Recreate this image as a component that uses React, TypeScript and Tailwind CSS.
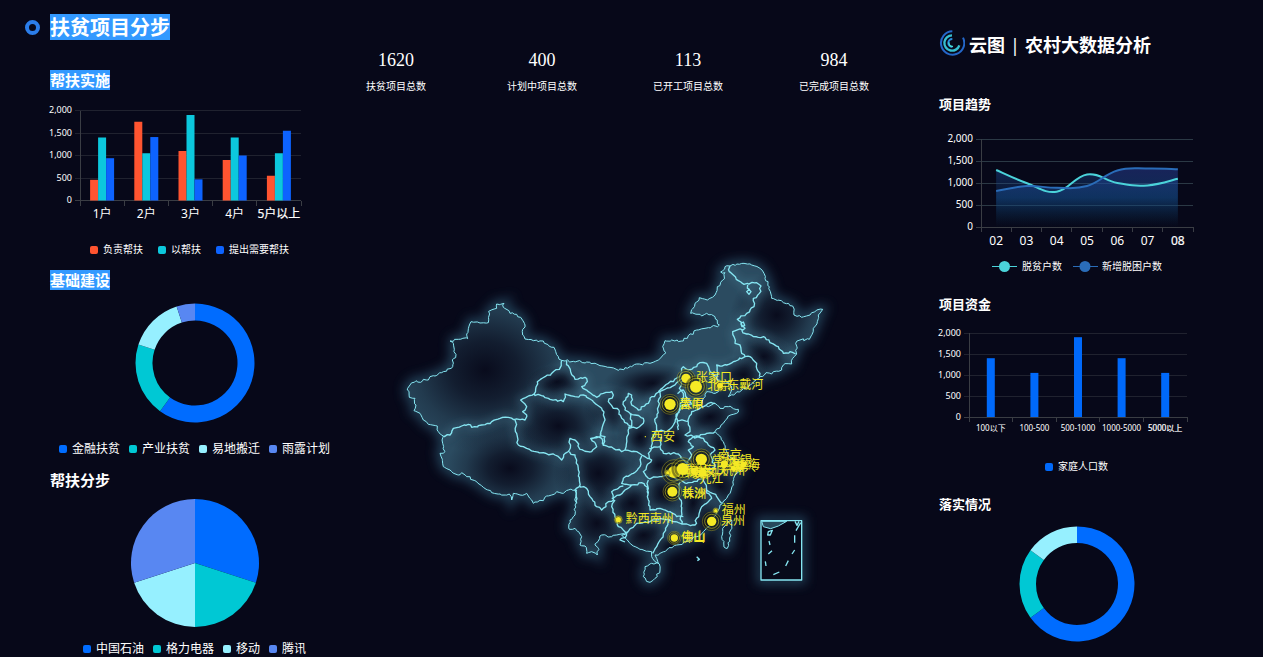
import React from 'react';

const SANS = "font-['Noto_Sans','Noto_Sans_CJK_SC',sans-serif]";

/* ---------- shared chart pieces ---------- */

type LegendItem = { x: number; label: string; color: string };

function Legend({ items, y, size }: { items: LegendItem[]; y: number; size: number }) {
  return (
    <g fill="#fff" fontSize={size}>
      {items.map((item) => (
        <g key={item.label}>
          <rect x={item.x} y={y - 4} width="8" height="8" rx="2" fill={item.color} />
          <text x={item.x + 13} y={y - 1} dominantBaseline="central">
            {item.label}
          </text>
        </g>
      ))}
    </g>
  );
}

type Frame = { left: number; right: number; top: number; step: number };

function Axes({
  frame,
  categories,
  gridColor,
  valueSize,
  labelSize,
  labelY,
}: {
  frame: Frame;
  categories: string[];
  gridColor: string;
  valueSize: number;
  labelSize: number;
  labelY: number;
}) {
  const { left, right, top, step } = frame;
  const bottom = top + step * 4;
  const band = (right - left) / categories.length;
  return (
    <g shapeRendering="crispEdges">
      {['2,000', '1,500', '1,000', '500', '0'].map((value, i) => (
        <g key={value}>
          <line x1={left - 5} x2={right} y1={top + i * step} y2={top + i * step} stroke={i === 4 ? '#3a3d44' : gridColor} />
          <text x={left - 8} y={top + i * step - 1} textAnchor="end" dominantBaseline="central" fill="#fff" fontSize={valueSize}>
            {value}
          </text>
        </g>
      ))}
      <line x1={left} x2={left} y1={top} y2={bottom} stroke="#3a3d44" />
      {categories.map((c, i) => (
        <g key={c}>
          <line x1={left + band * i} x2={left + band * i} y1={bottom} y2={bottom + 5} stroke="#3a3d44" />
          <text
            x={left + band * (i + 0.5)}
            y={labelY}
            textAnchor="middle"
            dominantBaseline="central"
            fill="#fff"
            fontSize={labelSize}
            stroke={i === categories.length - 1 ? '#fff' : 'none'}
            strokeWidth="0.2"
          >
            {c}
          </text>
        </g>
      ))}
      <line x1={right} x2={right} y1={bottom} y2={bottom + 5} stroke="#3a3d44" />
    </g>
  );
}

function BarChart({
  width,
  frame,
  categories,
  series,
  labelSize,
  labelY,
  legend,
  legendY,
  title,
}: {
  width: number;
  frame: Frame;
  categories: string[];
  series: { color: string; values: number[] }[];
  labelSize: number;
  labelY: number;
  legend: LegendItem[];
  legendY: number;
  title: string;
}) {
  const band = (frame.right - frame.left) / categories.length;
  const bottom = frame.top + frame.step * 4;
  return (
    <svg width={width} height="180" viewBox={`0 0 ${width} 180`} className={`block overflow-visible ${SANS}`} role="img" aria-label={title}>
      <Axes frame={frame} categories={categories} gridColor="#20222f" valueSize={9} labelSize={labelSize} labelY={labelY} />
      {series.map((s, k) =>
        s.values.map((v, i) => {
          const h = (v / 500) * frame.step;
          const x = frame.left + band * (i + 0.5) + (k - series.length / 2) * 8;
          return <rect key={`${k}-${i}`} x={x} y={bottom - h} width="8" height={h} fill={s.color} />;
        }),
      )}
      <Legend items={legend} y={legendY} size={10} />
    </svg>
  );
}

function PieChart({
  width,
  height,
  cx,
  cy,
  outer,
  inner,
  slices,
  legend,
  title,
}: {
  width: number;
  height: number;
  cx: number;
  cy: number;
  outer: number;
  inner: number;
  slices: { share: number; color: string }[];
  legend?: LegendItem[];
  title: string;
}) {
  let start = 0;
  const at = (share: number, r: number) => {
    const a = (share / 100) * Math.PI * 2;
    return `${(cx + Math.sin(a) * r).toFixed(2)} ${(cy - Math.cos(a) * r).toFixed(2)}`;
  };
  return (
    <svg width={width} height={height} viewBox={`0 0 ${width} ${height}`} className={`block overflow-visible ${SANS}`} role="img" aria-label={title}>
      {slices.map((s) => {
        const from = start;
        const to = start + s.share;
        start = to;
        const large = s.share > 50 ? 1 : 0;
        const d = `M${at(from, outer)}A${outer} ${outer} 0 ${large} 1 ${at(to, outer)}L${at(to, inner)}A${inner} ${inner} 0 ${large} 0 ${at(from, inner)}Z`;
        return <path key={s.color} d={d} fill={s.color} />;
      })}
      {legend && <Legend items={legend} y={159} size={12} />}
    </svg>
  );
}

function TrendChart() {
  const frame: Frame = { left: 42, right: 254, top: 25, step: 22 };
  const band = (frame.right - frame.left) / 7;
  const bottom = frame.top + frame.step * 4;
  const toPoints = (values: number[]) =>
    values.map((v, i) => [frame.left + band * (i + 0.5), bottom - (v / 500) * frame.step]);
  const curve = (values: number[]) => {
    const p = toPoints(values);
    let d = `M${p[0][0]} ${p[0][1]}`;
    for (let i = 0; i < p.length - 1; i++) {
      const a = p[Math.max(0, i - 1)];
      const b = p[i];
      const c = p[i + 1];
      const e = p[Math.min(p.length - 1, i + 2)];
      d += `C${b[0] + (c[0] - a[0]) / 5} ${b[1] + (c[1] - a[1]) / 5} ${c[0] - (e[0] - b[0]) / 5} ${c[1] - (e[1] - b[1]) / 5} ${c[0]} ${c[1]}`;
    }
    return d;
  };
  const lines = [
    { color: '#4bd3da', values: [1295, 1000, 800, 1195, 1000, 945, 1095], fill: 'url(#trend-a)' },
    { color: '#2a6cb8', values: [820, 930, 890, 930, 1285, 1330, 1315], fill: 'url(#trend-b)' },
  ];
  const close = `L${frame.left + band * 6.5} ${bottom}L${frame.left + band * 0.5} ${bottom}Z`;
  return (
    <svg width="276" height="180" viewBox="0 0 276 180" className={`block overflow-visible ${SANS}`} role="img" aria-label="项目趋势">
      <defs>
        <linearGradient id="trend-a" x1="0" y1="0" x2="0" y2="1">
          <stop offset="0" stopColor="#1e4fa0" stopOpacity="0.42" />
          <stop offset="1" stopColor="#0b3a5a" stopOpacity="0" />
        </linearGradient>
        <linearGradient id="trend-b" x1="0" y1="0" x2="0" y2="1">
          <stop offset="0" stopColor="#2a3f9a" stopOpacity="0.5" />
          <stop offset="0.5" stopColor="#15559a" stopOpacity="0.45" />
          <stop offset="1" stopColor="#0b3a5a" stopOpacity="0" />
        </linearGradient>
      </defs>
      <Axes
        frame={frame}
        categories={['02', '03', '04', '05', '06', '07', '08']}
        gridColor="#2b3945"
        valueSize={10}
        labelSize={12}
        labelY={126}
      />
      {lines.map((l) => (
        <path key={l.fill} d={curve(l.values) + close} fill={l.fill} />
      ))}
      {lines.map((l) => (
        <path key={l.color} d={curve(l.values)} fill="none" stroke={l.color} strokeWidth="2" />
      ))}
      <g fontSize="10" fill="#fff">
        <path d="M53 152.500h25" stroke="#4bd3da" />
        <circle cx="65.500" cy="152.500" r="5.500" fill="#4bd3da" />
        <text x="83" y="152" dominantBaseline="central">脱贫户数</text>
        <path d="M134 152.500h25" stroke="#2a6cb8" />
        <circle cx="146" cy="152.500" r="5.500" fill="#2a6cb8" />
        <text x="163" y="152" dominantBaseline="central">新增脱困户数</text>
      </g>
    </svg>
  );
}

/* ---------- map ---------- */

type Trace = [dx: number, dy: number, points: string];

function parse([dx, dy, points]: Trace) {
  return points.split(' ').map((pair) => {
    const [x, y] = pair.split(',').map(Number);
    return [x + dx, y + dy];
  });
}

/* Splits long segments and nudges the new points so that borders look ragged. */
function ragged(points: number[][]) {
  let seed = 7;
  const random = () => {
    seed = (seed * 16807) % 2147483647;
    return seed / 2147483647 - 0.5;
  };
  const out = [points[0]];
  for (let i = 1; i < points.length; i++) {
    const [ax, ay] = points[i - 1];
    const [bx, by] = points[i];
    const parts = Math.max(1, Math.round(Math.hypot(bx - ax, by - ay) / 8));
    for (let k = 1; k < parts; k++) {
      const t = k / parts;
      out.push([ax + (bx - ax) * t + random() * 7, ay + (by - ay) * t + random() * 7]);
    }
    out.push([bx, by]);
  }
  return 'M' + out.map(([x, y]) => `${x.toFixed(1)} ${y.toFixed(1)}`).join('L');
}

const OUTLINE: Trace[] = [
  [0, 120, '22,300 30,285 48,272 62,277 70,268 85,270 90,260 105,258 130,245 158,230 157,210 167,203 163,178 160,160 150,153 175,148 203,146 200,132 213,95 240,99 265,98 266,64 290,55 290,42 312,40 310,52 330,70 350,73 362,82 375,105 368,135 375,147 400,152 430,153 462,172 475,200 485,211 520,214 560,216 590,222'],
  [600, 0, '0,347 30,352 55,361 75,353 95,350 110,342 150,340 175,330 198,308 188,290 195,272 215,270 235,275 262,265 290,240 315,235 358,225 345,200 320,190 305,198 272,190 285,160 298,143 322,150 345,135 352,110 368,90 375,68 362,66 375,50 390,48 410,42 432,40 455,45 480,55 492,70 495,85 508,110 515,145 550,158 578,168 582,195 605,202 630,195 650,180 668,178 655,195 652,215 640,235 628,268 600,270 587,280 590,312 578,325 575,342 550,345 545,360 520,365 515,372 498,368 480,380 440,415 400,435 385,440 395,420 390,405 375,395 360,405 355,425 340,430 320,425 310,445 300,465 325,470'],
  [480, 360, '465,100 480,115 505,110 535,118 530,130 505,138 490,160 465,185 475,195 490,215 500,245 510,262 540,275 545,300 525,315 520,345 505,375 495,390 480,405 468,430 455,460 430,485 410,500 380,515 350,525 320,540 300,550 285,555'],
  [420, 510, '350,415 355,430 345,425 335,410 335,395 300,388 280,378 262,360 245,345 262,335 230,345 215,350 185,345 165,375 175,385 172,405 155,395 140,400 135,378 120,375 125,350 105,325 88,328 90,300 105,285 105,255 110,210'],
  [0, 120, '505,600 490,610 470,605 455,615 440,618 430,632 400,640 395,630 380,610 360,615 340,610 335,630 328,612 300,612 275,608 250,592 230,575 200,560 185,548 175,555 150,540 130,530 127,508 120,490 135,485 128,460 130,438 115,425 112,408 85,403 70,390 60,370 42,362 48,345 45,325 28,322 22,300'],
];

const BORDERS: Trace[] = [
  [0, 120, '130,438 150,435 160,415 185,408 205,403 215,412 245,405 275,395 300,385 325,382 345,388 375,390 380,375 368,365 380,350 362,330 402,312 412,275 435,260 478,238 485,211'],
  [0, 120, '500,213 512,245 525,268 555,262 562,275 545,290 565,305 590,322 610,310 635,305 640,315 625,335 640,355 658,362'],
  [0, 120, '402,312 430,318 450,328 490,335 495,312 525,320 550,315 580,335 605,355 615,390 605,420 600,440 572,445 590,470 575,485 540,478 525,450 510,445 508,480 485,510 465,495 430,488 380,475 355,465 350,430 345,390'],
  [0, 120, '508,485 525,495 535,540 538,590 525,600 530,640'],
  [480, 360, '178,122 185,145 205,165 215,170 210,130 195,120 190,95 205,70 215,75 215,105 235,120 265,100 270,85 300,65 335,50 350,38 370,20'],
  [480, 360, '205,170 230,175 250,160 250,145 225,135 210,130'],
  [480, 360, '95,205 110,200 125,205 130,225 160,235 185,245 195,240 230,245 245,255 275,270 250,305 265,325'],
  [480, 360, '120,190 135,200 130,228'],
  [480, 360, '245,258 240,290 220,310 190,325 185,340 215,345 245,338 262,352 262,380'],
  [480, 360, '58,345 80,355 90,380 110,410 125,420 145,395 160,390 155,365 175,355 190,348'],
  [480, 360, '155,385 180,375 195,360 215,345'],
  [480, 360, '165,390 155,410 165,440 175,470 195,485 200,495 180,510 195,516'],
  [480, 360, '210,170 200,205 195,240'],
  [480, 360, '275,270 265,250 275,235 275,205 290,180 285,155 295,110 300,65'],
  [480, 360, '290,180 320,185 340,165 350,140 360,110 370,70 358,55 370,30'],
  [480, 360, '305,200 300,230 310,250 355,252 375,275 395,300'],
  [480, 360, '268,235 300,230'],
  [480, 360, '350,148 385,155 390,185 375,195 400,200 440,190 465,185'],
  [480, 360, '385,155 395,125 430,110 445,100 465,100'],
  [480, 360, '400,200 385,215 400,230 385,240 395,255 380,280 395,300 430,320'],
  [480, 360, '400,200 430,205 445,225 465,240 450,255 465,290 440,300'],
  [480, 360, '265,325 300,320 320,315 345,325 380,340 430,325 440,360 470,380 485,400'],
  [480, 360, '265,330 262,380 270,420 300,415 330,425 350,440 370,440'],
  [480, 360, '360,335 355,380 365,400 362,440 365,462'],
  [480, 360, '440,360 455,385 425,410 410,445 405,465 365,462 330,450 320,470 305,505 290,530 278,550'],
  [480, 360, '200,490 230,460 270,455 300,445 330,450'],
  [600, 0, '390,48 388,65 400,75 415,92 432,103 470,98 483,108 478,130 460,145 462,170 440,190 412,208 425,225 435,235 398,245 405,280 420,285 425,310 435,320 450,320 470,340 478,380'],
  [600, 0, '425,240 440,252 475,262 495,262 510,278 535,290 550,310 570,305 587,312'],
  [600, 0, '435,320 400,335 380,345 360,348 350,345 350,380 330,365 320,340 300,338 290,350 265,360 250,350 240,380 205,400 175,425'],
  [600, 0, '350,380 365,400'],
  [600, 0, '443,105 448,118 440,125 447,133 453,125 447,118'],
  [600, 0, '422,220 430,216 434,226 426,230 422,220'],
  [600, 0, '232,430 250,420 262,445 275,462 240,470 228,500 235,540'],
];

const ISLANDS: Trace[] = [
  [420, 510, '558,385 545,350 548,325 565,305 575,300 572,330 562,385 558,385'],
  [420, 510, '330,487 310,470 315,440 335,430 358,432 360,450 345,475 330,487'],
];

const OUTLINE_PATH = ragged(OUTLINE.flatMap(parse)) + 'Z';
const BORDER_PATH = BORDERS.map((t) => ragged(parse(t))).join('');
const ISLAND_PATH = ISLANDS.map((t) => ragged(parse(t)) + 'Z').join('');

const HOLLOWS = [
  [255, 360, 290, 250], [330, 655, 190, 140], [475, 528, 150, 115], [595, 670, 135, 130], [1130, 195, 140, 130],
  [1090, 320, 90, 65], [1030, 375, 85, 60], [930, 500, 95, 65], [590, 820, 110, 110], [730, 855, 105, 80],
  [695, 760, 85, 75], [790, 730, 80, 85], [825, 565, 85, 75], [775, 645, 85, 60], [805, 480, 55, 90],
  [880, 760, 65, 80], [960, 710, 75, 75], [910, 810, 65, 75], [955, 590, 65, 75], [900, 650, 55, 70],
  [720, 560, 70, 80], [810, 890, 75, 40], [640, 480, 90, 70], [470, 395, 90, 50], [760, 400, 150, 60],
];

const CITIES: [x: number, y: number, r: number, ring: number][] = [
  [858, 385, 14, 27], [888, 410, 18, 32], [960, 407, 9, 16], [810, 463, 17, 30], [736, 560, 2, 0],
  [904, 628, 17, 31], [822, 666, 18, 37], [848, 657, 18, 34], [803, 668, 5, 8], [884, 664, 11, 20],
  [908, 668, 12, 20], [973, 642, 11, 20], [1010, 645, 12, 18], [1030, 644, 9, 14], [817, 725, 15, 28],
  [947, 782, 5, 8], [935, 814, 14, 28], [655, 809, 8, 12], [823, 864, 11, 20], [1000, 655, 8, 12],
];

const LABELS: [x: number, y: number, text: string][] = [
  [888, 381, '张家口'], [922, 406, '北京'], [982, 403, '东戴河'], [838, 463, '晋中'], [840, 459, '太原'],
  [753, 560, '西安'], [953, 613, '南京'], [936, 630, '常州'], [984, 632, '无锡'], [1008, 643, '上海'],
  [996, 650, '嘉兴'], [964, 662, '杭州'], [832, 664, '荆州'], [850, 658, '武汉'], [880, 670, '黄冈'],
  [862, 668, '咸宁'], [912, 662, '安庆'], [898, 684, '九江'], [845, 726, '长沙'], [847, 731, '株洲'],
  [965, 779, '福州'], [963, 812, '泉州'], [677, 805, '黔西南州'], [843, 861, '佛山'], [845, 860, '中山'],
];

function CityMap() {
  return (
    <svg viewBox="-180 0 1701 1050" className={`block h-auto w-full ${SANS}`} role="img" aria-label="扶贫项目地图">
      <defs>
        <radialGradient id="hollow">
          <stop offset="0" stopColor="#070819" stopOpacity="0.95" />
          <stop offset="0.35" stopColor="#070819" stopOpacity="0.68" />
          <stop offset="0.7" stopColor="#070819" stopOpacity="0.25" />
          <stop offset="1" stopColor="#070819" stopOpacity="0" />
        </radialGradient>
        <filter id="halo" x="-20%" y="-20%" width="140%" height="140%">
          <feGaussianBlur stdDeviation="16" />
        </filter>
        <filter id="soft" x="-20%" y="-20%" width="140%" height="140%">
          <feGaussianBlur stdDeviation="12" />
        </filter>
        <clipPath id="land">
          <path d={OUTLINE_PATH} />
        </clipPath>
      </defs>
      <g filter="url(#halo)" opacity="0.55">
        <path d={OUTLINE_PATH + ISLAND_PATH} fill="#2b5166" stroke="#37708a" strokeWidth="24" />
        <rect x="1083" y="812" width="122" height="178" fill="none" stroke="#37708a" strokeWidth="24" />
      </g>
      <path d={OUTLINE_PATH} fill="#2b4b60" />
      <g clipPath="url(#land)">
        {HOLLOWS.map(([cx, cy, rx, ry]) => (
          <ellipse key={`${cx}-${cy}`} cx={cx} cy={cy} rx={rx} ry={ry} fill="url(#hollow)" />
        ))}
        <path d={BORDER_PATH} fill="none" stroke="#4f8ba3" strokeWidth="18" strokeOpacity="0.35" filter="url(#soft)" />
      </g>
      <path d={ISLAND_PATH} fill="#14263a" />
      <rect x="1083" y="812" width="122" height="178" fill="#070a1a" />
      <g fill="none" stroke="#86e6f2" strokeLinejoin="round">
        <path d={OUTLINE_PATH + ISLAND_PATH} strokeWidth="3" />
        <path d={BORDER_PATH} strokeWidth="4" />
        <rect x="1083" y="812" width="122" height="178" strokeWidth="4" />
        <path d="M1085 814L1090 830L1112 836L1135 828L1160 814Z" fill="#27495c" strokeWidth="3" />
        <path
          d="M1185 814l6 12l6-12M1202 818l-14 24M1105 845l12-4l-6 14l-8 0zM1184 856v22M1107 873l3 12M1184 900l-8 12M1116 902l-11 10M1165 932l-8 16M1096 934l2 14M1138 966l-18 8M890 920l8 8l-6 4"
          strokeWidth="4"
        />
      </g>
      <g fill="#f4e925">
        {CITIES.map(([x, y, r, ring]) => (
          <g key={`${x}-${y}`}>
            {ring > 0 && <circle cx={x} cy={y} r={ring} fill="#191b12" fillOpacity="0.5" stroke="#f4e925" strokeOpacity="0.45" strokeWidth="2" />}
            {ring > 0 && <circle cx={x} cy={y} r={(ring + r) / 2} fill="none" stroke="#f4e925" strokeOpacity="0.5" strokeWidth="3" />}
            <circle cx={x} cy={y} r={r} />
          </g>
        ))}
        {LABELS.map(([x, y, text]) => (
          <text key={text} x={x} y={y} fontSize="36" dominantBaseline="central">
            {text}
          </text>
        ))}
      </g>
    </svg>
  );
}

/* ---------- page ---------- */

function LeftHeading({ children, selected }: { children: string; selected?: boolean }) {
  return (
    <h2 className="flex text-[15px] leading-5 font-bold">
      <span className={selected ? 'bg-[#3399ff]' : ''}>{children}</span>
    </h2>
  );
}

function RightHeading({ children }: { children: string }) {
  return <h2 className="text-[13px] leading-5 font-bold">{children}</h2>;
}

function Logo() {
  return (
    <svg width="26" height="26" viewBox="0 0 78 78" fill="none" aria-hidden="true">
      <path d="M40 4A35 35 0 1 0 72 23" stroke="#2467c9" strokeWidth="6" />
      <path d="M39 16A23 23 0 1 0 61 46" stroke="#36bfd0" strokeWidth="7" />
      <path d="M40 27A12 12 0 0 0 40 51" stroke="#2b8fe0" strokeWidth="6" />
      <path d="M30 37A10 10 0 0 0 42 49" stroke="#45dcd5" strokeWidth="4" />
    </svg>
  );
}

const STATS = [
  { value: '1620', label: '扶贫项目总数' },
  { value: '400', label: '计划中项目总数' },
  { value: '113', label: '已开工项目总数' },
  { value: '984', label: '已完成项目总数' },
];

export default function App() {
  return (
    <div className={`grid min-h-screen grid-cols-[340fr_567fr_356fr] bg-[#070819] text-white ${SANS}`}>
      <section>
        <header className="flex items-center gap-2.5 pt-3.5 pl-[25px]">
          <span className="size-[15px] rounded-full border-4 border-[#2b7de9]" />
          <h1 className="bg-[#3399ff] pt-0.5 text-[20px] leading-6 font-bold">扶贫项目分步</h1>
        </header>
        <div className="pt-[30px] pl-[50px]">
          <LeftHeading selected>帮扶实施</LeftHeading>
          <BarChart
            title="帮扶实施"
            width={290}
            frame={{ left: 30, right: 251, top: 20.5, step: 22.5 }}
            categories={['1户', '2户', '3户', '4户', '5户以上']}
            series={[
              { color: '#ff5430', values: [460, 1750, 1100, 900, 550] },
              { color: '#0cc8dd', values: [1400, 1050, 1900, 1400, 1050] },
              { color: '#0d63ff', values: [940, 1410, 470, 1000, 1550] },
            ]}
            labelSize={12}
            labelY={123}
            legend={[
              { x: 40, label: '负责帮扶', color: '#ff5430' },
              { x: 108, label: '以帮扶', color: '#0cc8dd' },
              { x: 166, label: '提出需要帮扶', color: '#0d63ff' },
            ]}
            legendY={160}
          />
          <LeftHeading selected>基础建设</LeftHeading>
          <PieChart
            title="基础建设"
            width={290}
            height={180}
            cx={145}
            cy={73}
            outer={59.5}
            inner={42.5}
            slices={[
              { share: 60, color: '#006cff' },
              { share: 20, color: '#00c8d4' },
              { share: 15, color: '#96f0ff' },
              { share: 5, color: '#5887f2' },
            ]}
            legend={[
              { x: 9, label: '金融扶贫', color: '#006cff' },
              { x: 79, label: '产业扶贫', color: '#00c8d4' },
              { x: 149, label: '易地搬迁', color: '#96f0ff' },
              { x: 219, label: '雨露计划', color: '#5887f2' },
            ]}
          />
          <LeftHeading>帮扶分步</LeftHeading>
          <PieChart
            title="帮扶分步"
            width={290}
            height={167}
            cx={145}
            cy={73}
            outer={64}
            inner={0}
            slices={[
              { share: 30, color: '#006cff' },
              { share: 20, color: '#00c8d4' },
              { share: 20, color: '#96f0ff' },
              { share: 30, color: '#5887f2' },
            ]}
            legend={[
              { x: 33, label: '中国石油', color: '#006cff' },
              { x: 103, label: '格力电器', color: '#00c8d4' },
              { x: 173, label: '移动', color: '#96f0ff' },
              { x: 219, label: '腾讯', color: '#5887f2' },
            ]}
          />
        </div>
      </section>

      <main>
        <dl className="flex h-[250px] justify-between pt-12 pr-[37px] pl-5">
          {STATS.map((s) => (
            <div key={s.label} className="flex w-[72px] flex-col-reverse items-center justify-end gap-1">
              <dt className="text-[10px] leading-5 whitespace-nowrap">{s.label}</dt>
              <dd className="font-['Liberation_Serif',serif] text-[18px] leading-6">{s.value}</dd>
            </div>
          ))}
        </dl>
        <CityMap />
      </main>

      <aside className="pl-8">
        <header className="flex items-center gap-1 pt-7 pb-9 text-[18px] font-bold">
          <Logo />
          <span className="flex gap-[5px] pt-1 leading-[26px]">
            <span>云图</span>
            <span className="font-normal">|</span>
            <span>农村大数据分析</span>
          </span>
        </header>
        <RightHeading>项目趋势</RightHeading>
        <TrendChart />
        <RightHeading>项目资金</RightHeading>
        <BarChart
          title="项目资金"
          width={276}
          frame={{ left: 30, right: 248, top: 19, step: 21 }}
          categories={['100以下', '100-500', '500-1000', '1000-5000', '5000以上']}
          series={[{ color: '#0069fa', values: [1400, 1050, 1900, 1400, 1050] }]}
          labelSize={8}
          labelY={113}
          legend={[{ x: 106, label: '家庭人口数', color: '#0069fa' }]}
          legendY={153}
        />
        <RightHeading>落实情况</RightHeading>
        <PieChart
          title="落实情况"
          width={276}
          height={142}
          cx={138}
          cy={70}
          outer={57.5}
          inner={41}
          slices={[
            { share: 65, color: '#006cff' },
            { share: 20, color: '#00c8d4' },
            { share: 15, color: '#96f0ff' },
          ]}
        />
      </aside>
    </div>
  );
}
